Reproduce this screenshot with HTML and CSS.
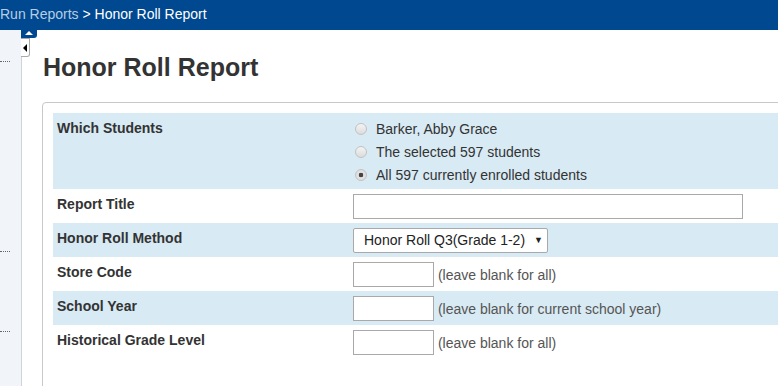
FILE: index.html
```html
<!DOCTYPE html>
<html lang="en">

<head>
  <meta charset="UTF-8">
  <meta name="viewport" content="width=device-width, initial-scale=1.0">
  <title>Honor Roll Report</title>
  <link rel="stylesheet" href="styles.css">
</head>

<body>
  <div class="breadcrumb">
    <a href="#">Run Reports</a> &gt; Honor Roll Report
  </div>

  <div class="page">
    <div class="sidebar">
      <span class="dots dots-1"></span>
      <span class="dots dots-2"></span>
      <span class="dots dots-3"></span>
      <div class="tab-up"><span></span></div>
      <div class="tab-left"><span></span></div>
    </div>

    <div class="content">
      <h1>Honor Roll Report</h1>

      <div class="box">
        <table class="report-form">
          <tr class="shaded">
            <td class="label">Which Students</td>
            <td class="students">
              <label class="radio"><input type="radio" name="which"> Barker, Abby Grace</label>
              <label class="radio"><input type="radio" name="which"> The selected 597 students</label>
              <label class="radio"><input type="radio" name="which" checked> All 597 currently enrolled students</label>
            </td>
          </tr>
          <tr>
            <td class="label">Report Title</td>
            <td><input type="text" class="title-input"></td>
          </tr>
          <tr class="shaded">
            <td class="label">Honor Roll Method</td>
            <td>
              <div class="select">Honor Roll Q3(Grade 1-2) <span class="arrow">&#9660;</span></div>
            </td>
          </tr>
          <tr>
            <td class="label">Store Code</td>
            <td><input type="text" class="small-input"> <span class="hint">(leave blank for all)</span></td>
          </tr>
          <tr class="shaded">
            <td class="label">School Year</td>
            <td><input type="text" class="small-input"> <span class="hint">(leave blank for current school year)</span></td>
          </tr>
          <tr>
            <td class="label">Historical Grade Level</td>
            <td><input type="text" class="small-input"> <span class="hint">(leave blank for all)</span></td>
          </tr>
        </table>
      </div>
    </div>
  </div>
</body>

</html>
```

FILE: styles.css
```css
body {
  margin: 0;
  font-family: "Liberation Sans", Arial, sans-serif;
  color: #333;
  background-color: #ffffff;
  overflow: hidden;
}

.breadcrumb {
  height: 30px;
  line-height: 28px;
  background-color: #00488f;
  color: #ffffff;
  font-size: 14px;
  white-space: nowrap;
}

.breadcrumb a {
  color: #b7cde3;
  text-decoration: none;
}

.page {
  display: flex;
  height: 356px;
  overflow: hidden;
}

.sidebar {
  position: relative;
  width: 21px;
  flex-shrink: 0;
  background-color: #f1f4f8;
  border-right: 1px solid #cfd4da;
}

.dots {
  position: absolute;
  left: 0;
  width: 10px;
  border-top: 1px dotted #666;
}

.dots-1 { top: 31px; }
.dots-2 { top: 221px; }
.dots-3 { top: 301px; }

.tab-up {
  position: absolute;
  left: 21px;
  top: 0;
  width: 16px;
  height: 8px;
  background-color: #00488f;
  border-radius: 0 0 3px 0;
}

.tab-up span {
  position: absolute;
  left: 4px;
  top: 1px;
  border-left: 4px solid transparent;
  border-right: 4px solid transparent;
  border-bottom: 4px solid #ffffff;
}

.tab-left {
  position: absolute;
  left: 21px;
  top: 8px;
  width: 8px;
  height: 17px;
  background-color: #ffffff;
  border: 1px solid #aaa;
  border-left: none;
  border-radius: 0 0 3px 0;
}

.tab-left span {
  position: absolute;
  left: 2px;
  top: 5px;
  border-top: 4px solid transparent;
  border-bottom: 4px solid transparent;
  border-right: 4px solid #000;
}

.content {
  flex: 1;
  padding-left: 20px;
  min-width: 0;
  overflow: hidden;
}

.content h1 {
  font-size: 25px;
  margin: 22px 0 0 1px;
  line-height: 30px;
  color: #333;
}

.box {
  margin-top: 20px;
  width: 800px;
  border: 1px solid #c8c8c8;
  border-radius: 4px 0 0 0;
  padding: 10px 0 40px 10px;
}

.report-form {
  border-collapse: collapse;
  width: 100%;
  font-size: 14px;
}

.report-form td {
  height: 34px;
  padding: 0 0 0 4px;
  vertical-align: middle;
}

.report-form tr.shaded td {
  background-color: #d8eaf3;
}

.report-form td.label {
  width: 296px;
  font-weight: bold;
  vertical-align: top;
  padding-top: 7px;
  height: 27px;
}

.report-form td.students {
  padding: 4px 0 3px 0;
}

.radio {
  display: flex;
  align-items: center;
  height: 23px;
  font-size: 14px;
  color: #333;
}

.radio input {
  appearance: none;
  margin: 0 9px 0 2px;
  width: 12px;
  height: 12px;
  border: 1px solid #c2c2c2;
  border-radius: 50%;
  background: linear-gradient(#f4f4f4, #dcdcdc);
}

.radio input:checked {
  background: radial-gradient(circle, #444 0, #444 2px, #e2e2e2 2.6px, #dcdcdc 100%);
}

.title-input {
  width: 386px;
  height: 21px;
  margin: 0 0 0 -4px;
  border: 1px solid #a9a9a9;
  padding: 1px;
}

.select {
  display: inline-block;
  margin-left: -4px;
  width: 183px;
  height: 23px;
  line-height: 23px;
  padding-left: 10px;
  border: 1px solid #a9a9a9;
  border-radius: 2px;
  background-color: #ffffff;
  font-size: 14px;
  color: #222;
  white-space: nowrap;
}

.select .arrow {
  font-size: 9px;
  margin-left: 5px;
  vertical-align: 2px;
}

.small-input {
  width: 77px;
  height: 21px;
  margin: 0 0 0 -4px;
  border: 1px solid #a9a9a9;
  padding: 1px;
  vertical-align: middle;
}

.hint {
  font-size: 14px;
  color: #555;
  vertical-align: middle;
}
```
